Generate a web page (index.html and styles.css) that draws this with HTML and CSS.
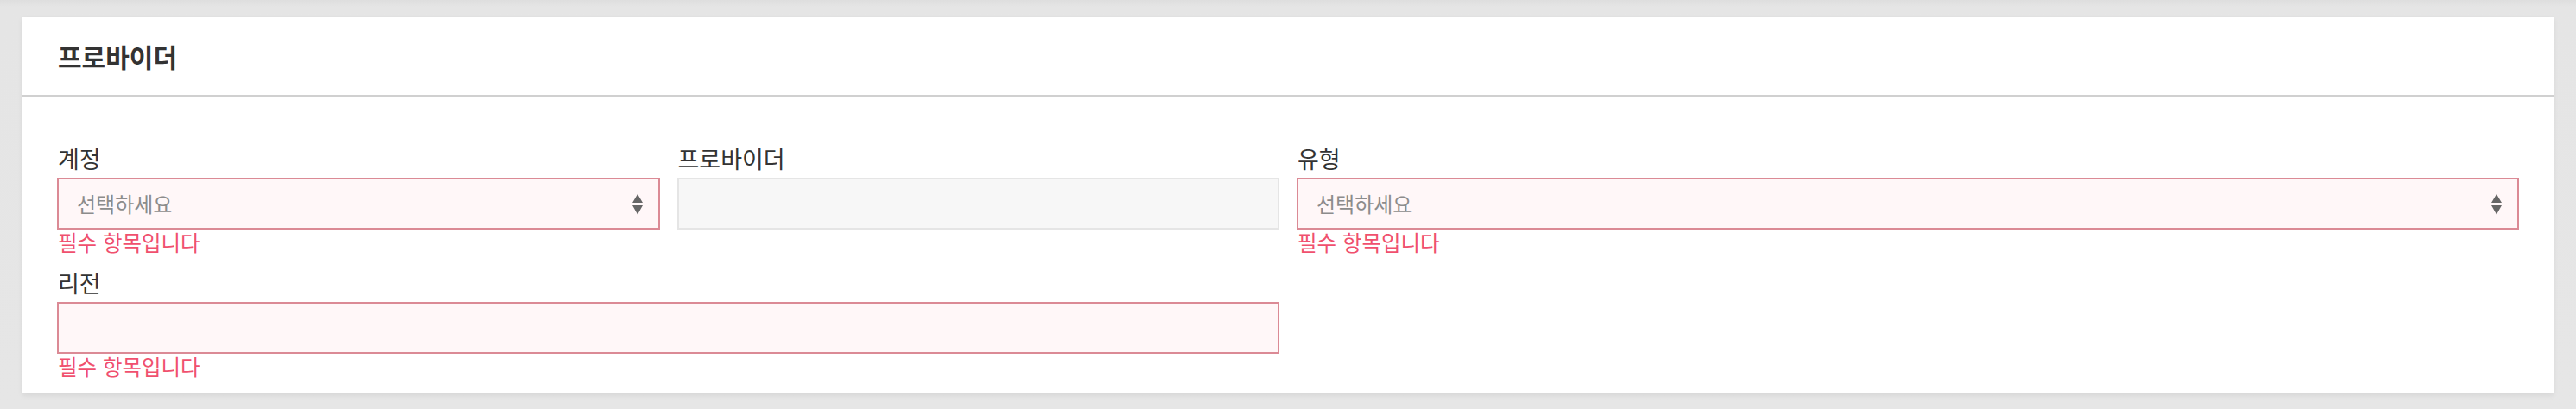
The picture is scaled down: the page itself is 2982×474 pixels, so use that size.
FILE: index.html
```html
<!DOCTYPE html>
<html lang="ko">
<head>
<meta charset="utf-8">
<title>프로바이더</title>
<link rel="stylesheet" href="styles.css">
</head>
<body>
<div class="card">
  <div class="card-header">
    <h3 class="card-title">프로바이더</h3>
  </div>
  <div class="card-body">
    <div class="form-grid">
      <div class="field span-1">
        <label class="field-label">계정</label>
        <div class="control is-invalid select">
          <span class="placeholder">선택하세요</span>
          <svg class="caret" width="12" height="24" viewBox="0 0 12 24"><path d="M6 0 L12 10 L0 10 Z M0 13 L12 13 L6 23.5 Z" fill="#666"/></svg>
        </div>
        <div class="error">필수 항목입니다</div>
      </div>
      <div class="field span-1">
        <label class="field-label">프로바이더</label>
        <div class="control is-disabled"></div>
      </div>
      <div class="field span-2">
        <label class="field-label">유형</label>
        <div class="control is-invalid select">
          <span class="placeholder">선택하세요</span>
          <svg class="caret" width="12" height="24" viewBox="0 0 12 24"><path d="M6 0 L12 10 L0 10 Z M0 13 L12 13 L6 23.5 Z" fill="#666"/></svg>
        </div>
        <div class="error">필수 항목입니다</div>
      </div>
      <div class="field span-2">
        <label class="field-label">리전</label>
        <div class="control is-invalid"></div>
        <div class="error">필수 항목입니다</div>
      </div>
    </div>
  </div>
</div>
</body>
</html>
```

FILE: styles.css
```css
* { box-sizing: border-box; }

html, body {
  margin: 0;
  height: 100%;
}

body {
  background: linear-gradient(#dedede 0, #e5e5e5 8px, #e6e6e6 100%);
  padding: 20px 26px 18px;
  font-family: "Noto Sans CJK KR", "Noto Sans", sans-serif;
  color: #333;
}

.card {
  background: #fff;
  box-shadow: 0 2px 6px rgba(0, 0, 0, 0.08);
}

.card-header {
  height: 92px;
  padding: 0 41px;
  display: flex;
  align-items: center;
  border-bottom: 2px solid #d0d0d0;
}

.card-title {
  margin: 0;
  font-size: 30px;
  font-weight: 700;
  color: #333;
  line-height: 1;
}

.card-body {
  padding: 54px 40px 16px;
}

.form-grid {
  display: grid;
  grid-template-columns: repeat(4, 1fr);
  column-gap: 20px;
  row-gap: 14px;
}

.span-1 { grid-column: span 1; }
.span-2 { grid-column: span 2; }

.field-label {
  display: block;
  font-size: 27px;
  line-height: 36px;
  margin-bottom: 4px;
  padding-left: 1px;
  color: #333;
}

.control {
  height: 60px;
  border: 2px solid #e5e5e5;
  background: #fff;
  display: flex;
  align-items: center;
  padding: 0 18px 0 21px;
}

.control.is-invalid {
  border-color: #db8a95;
  background: #fff7f8;
}

.control.is-disabled {
  background: #f7f7f7;
  border-color: #e5e5e5;
}

.select {
  justify-content: space-between;
}

.placeholder {
  font-size: 24px;
  color: #8c8c8c;
  line-height: 1;
}

.caret {
  display: block;
  margin-top: 1px;
}

.error {
  font-size: 24.5px;
  line-height: 30px;
  color: #f0506e;
  padding-left: 1px;
}
```
